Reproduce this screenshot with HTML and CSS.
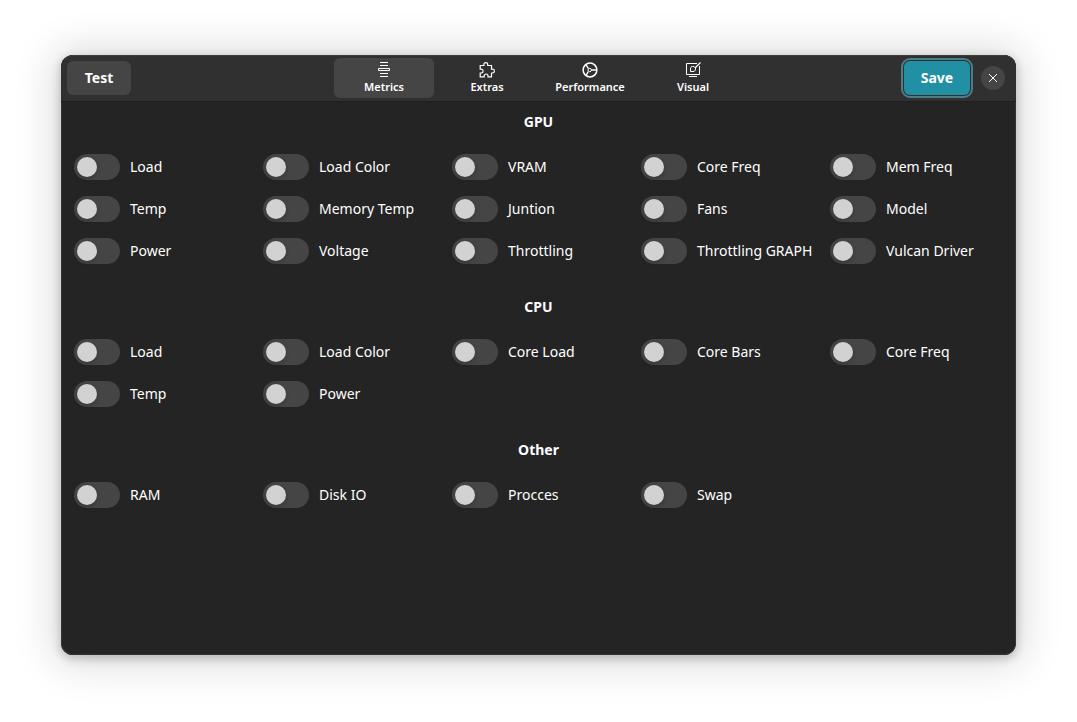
FILE: index.html
```html
<!DOCTYPE html>
<html lang="en">
<head>
<meta charset="utf-8">
<title>Metrics</title>
<link rel="stylesheet" href="styles.css">
</head>
<body>
<div class="window">
  <header class="header">
    <div class="side"><button class="button" type="button">Test</button></div>
    <nav class="tabs">
      <button class="tab active" type="button">
        <svg class="icon" viewBox="0 0 16 16"><path d="M4 .5h8M4 3.5h8M2.5 6.5h11v2h-11zM4 11.5h8M4 14.5h8"/></svg>
        Metrics
      </button>
      <button class="tab" type="button">
        <svg class="icon" viewBox="0 0 16 16"><path stroke-width="1.2" d="M1.2 3.5h3.700V2.500a1.900 1.900 0 0 1 3.800 0v1h3.800v3.700h1a1.900 1.900 0 0 1 0 3.800h-1v3.900H9v-1a1.900 1.900 0 0 0-3.800 0v1h-4v-3.900h1a1.900 1.900 0 0 0 0-3.800h-1z"/></svg>
        Extras
      </button>
      <button class="tab" type="button">
        <svg class="icon" viewBox="0 0 16 16"><circle cx="8" cy="8" r="6.9" stroke-width="1.5"/><path stroke-width="1.5" d="M4 2.5l2.3 4M4 13.5l2.3-4M9.5 8H15"/><circle cx="7.7" cy="8" r="1.7"/></svg>
        Performance
      </button>
      <button class="tab" type="button">
        <svg class="icon" viewBox="0 0 16 16"><path d="M12 1.5H1.5v11h13V4M4 14.5h8M9 4.5H7.500c-1.500 0-2 1-2 2.500v2.500h2.500c1.700 0 2.500-1 2.500-2.500V6z"/><path stroke-width="1.2" d="M15.500.5L10 6"/></svg>
        Visual
      </button>
    </nav>
    <div class="side end">
      <button class="button save" type="button">Save</button>
      <button class="close" type="button" aria-label="Close"><svg class="cross" viewBox="0 0 10 10"><path d="M1 1l8 8M9 1l-8 8"/></svg></button>
    </div>
  </header>
  <main class="content">
    <section>
      <h2 class="title">GPU</h2>
      <div class="grid">
        <label class="option"><input class="switch" type="checkbox" role="switch">Load</label>
        <label class="option"><input class="switch" type="checkbox" role="switch">Load Color</label>
        <label class="option"><input class="switch" type="checkbox" role="switch">VRAM</label>
        <label class="option"><input class="switch" type="checkbox" role="switch">Core Freq</label>
        <label class="option"><input class="switch" type="checkbox" role="switch">Mem Freq</label>
        <label class="option"><input class="switch" type="checkbox" role="switch">Temp</label>
        <label class="option"><input class="switch" type="checkbox" role="switch">Memory Temp</label>
        <label class="option"><input class="switch" type="checkbox" role="switch">Juntion</label>
        <label class="option"><input class="switch" type="checkbox" role="switch">Fans</label>
        <label class="option"><input class="switch" type="checkbox" role="switch">Model</label>
        <label class="option"><input class="switch" type="checkbox" role="switch">Power</label>
        <label class="option"><input class="switch" type="checkbox" role="switch">Voltage</label>
        <label class="option"><input class="switch" type="checkbox" role="switch">Throttling</label>
        <label class="option"><input class="switch" type="checkbox" role="switch">Throttling GRAPH</label>
        <label class="option"><input class="switch" type="checkbox" role="switch">Vulcan Driver</label>
      </div>
    </section>
    <section>
      <h2 class="title">CPU</h2>
      <div class="grid">
        <label class="option"><input class="switch" type="checkbox" role="switch">Load</label>
        <label class="option"><input class="switch" type="checkbox" role="switch">Load Color</label>
        <label class="option"><input class="switch" type="checkbox" role="switch">Core Load</label>
        <label class="option"><input class="switch" type="checkbox" role="switch">Core Bars</label>
        <label class="option"><input class="switch" type="checkbox" role="switch">Core Freq</label>
        <label class="option"><input class="switch" type="checkbox" role="switch">Temp</label>
        <label class="option"><input class="switch" type="checkbox" role="switch">Power</label>
      </div>
    </section>
    <section>
      <h2 class="title">Other</h2>
      <div class="grid">
        <label class="option"><input class="switch" type="checkbox" role="switch">RAM</label>
        <label class="option"><input class="switch" type="checkbox" role="switch">Disk IO</label>
        <label class="option"><input class="switch" type="checkbox" role="switch">Procces</label>
        <label class="option"><input class="switch" type="checkbox" role="switch">Swap</label>
      </div>
    </section>
  </main>
</div>
</body>
</html>
```
FILE: styles.css
```css
* { box-sizing: border-box; }

body {
  margin: 0;
  min-height: 100vh;
  padding: 55px 61px 67px;
  display: flex;
  background: #fff;
  color: #fff;
  font: 14px/20px "Noto Sans", sans-serif;
}

.window {
  flex: 1;
  border-radius: 12px;
  overflow: hidden;
  background: #242424;
  box-shadow: inset 0 0 0 1px #343636, 0 3px 10px 1px rgba(0, 0, 0, .2), 0 2px 40px 8px rgba(0, 0, 0, .14);
}

.header {
  display: grid;
  grid-template-columns: 1fr auto 1fr;
  align-items: center;
  height: 47px;
  padding: 0 6px;
  border-bottom: 1px solid #1f1f1f;
  background: #303030;
  box-shadow: inset 0 1px #3d3f3f;
  border-radius: 12px 12px 0 0;
}

.side {
  display: flex;
  align-items: center;
  gap: 11px;
}

.end {
  justify-content: flex-end;
  padding-right: 5px;
}

button {
  border: 0;
  padding: 0;
  color: #fff;
  font: bold 14px/20px "Noto Sans", sans-serif;
}

.button {
  min-width: 64px;
  height: 34px;
  padding: 0 16px;
  border-radius: 6px;
  background: #454545;
}

.save {
  min-width: 66px;
  background: #2190a4;
  outline: 2px solid #4c7e87;
  outline-offset: 1px;
}

.close {
  display: grid;
  place-items: center;
  width: 24px;
  height: 24px;
  border-radius: 50%;
  background: #454545;
}

.tabs {
  display: flex;
  gap: 3px;
}

.tab {
  display: flex;
  flex-direction: column;
  align-items: center;
  gap: 1px;
  width: 100px;
  height: 40px;
  padding-top: 4px;
  border-radius: 6px;
  background: none;
  font-size: 11px;
  font-weight: 600;
  line-height: 15px;
}

.active { background: #454545; }

.icon,
.cross {
  fill: none;
  stroke: #fff;
}

.icon {
  width: 16px;
  height: 16px;
}

.cross {
  width: 10px;
  height: 10px;
}

.content {
  padding: 0 5px;
}

.title {
  margin: 0;
  padding: 10px 0;
  font-size: 14px;
  line-height: 20px;
  text-align: center;
}

.grid {
  display: grid;
  grid-template-columns: repeat(5, 1fr);
  row-gap: 16px;
  padding: 12px 0 23px;
}

.option {
  display: flex;
  align-items: center;
  gap: 10px;
  height: 26px;
  padding-left: 8px;
  white-space: nowrap;
}

.switch {
  appearance: none;
  flex: none;
  width: 46px;
  height: 26px;
  margin: 0;
  padding: 3px;
  border-radius: 13px;
  background: #454545;
}

.switch::before {
  content: "";
  display: block;
  width: 20px;
  height: 20px;
  border-radius: 50%;
  background: #d2d2d2;
  box-shadow: 0 2px 4px rgba(0, 0, 0, .2);
}

.switch:checked { background: #2190a4; }
.switch:checked::before { margin-left: 20px; }
```
